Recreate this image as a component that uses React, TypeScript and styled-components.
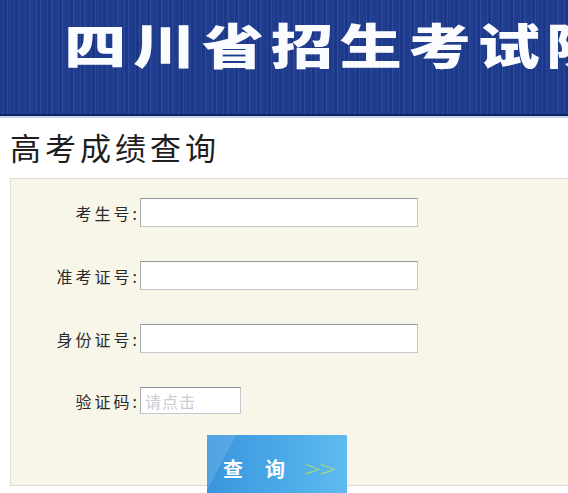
import React from "react";
import styled, { createGlobalStyle } from "styled-components";

const GlobalStyle = createGlobalStyle`
  html, body {
    margin: 0;
    padding: 0;
    background: #ffffff;
    overflow: hidden;
  }
  body {
    font-family: "Noto Sans CJK SC", "Liberation Sans", sans-serif;
  }
`;

const Page = styled.div`
  width: 568px;
  height: 493px;
  overflow: hidden;
  background: #ffffff;
`;

const Banner = styled.header`
  height: 116px;
  box-sizing: border-box;
  padding: 19px 0 0 64px;
  overflow: hidden;
  white-space: nowrap;
  background: repeating-linear-gradient(
    90deg,
    #1f3b8b 0 3px,
    #28479c 3px 4px,
    #1c3785 4px 7px,
    #2b4ba2 7px 8px,
    #203d8e 8px 11px
  );
  border-bottom: 2px solid #0e2463;
  box-shadow: 0 2px 0 #c9d6ee;
`;

const BannerTitle = styled.h1`
  display: inline-block;
  margin: 0;
  font-size: 48px;
  line-height: 48px;
  font-weight: 900;
  letter-spacing: 5px;
  color: #fbfcff;
  transform: scaleX(1.3);
  transform-origin: left center;
`;

const Heading = styled.h2`
  margin: 0;
  padding: 15px 10px 15px;
  font-size: 31px;
  line-height: 32px;
  font-weight: 400;
  letter-spacing: 4px;
  color: #1e1e1e;
`;

const FormPanel = styled.form`
  box-sizing: border-box;
  height: 308px;
  margin-left: 10px;
  padding-top: 19px;
  background: #f8f5e9;
  border-top: 1px solid #dcdcd4;
  border-left: 1px solid #e2dfd4;
  border-bottom: 1px solid #dcdad2;
`;

const FieldGrid = styled.div`
  display: grid;
  grid-template-columns: 129px auto;
  row-gap: 34px;
  align-items: center;
  justify-items: start;
`;

const Label = styled.label`
  justify-self: end;
  font-size: 16px;
  line-height: 20px;
  letter-spacing: 3px;
  color: #2a2a2a;
`;

const TextField = styled.input<{ $width: number; $height: number }>`
  box-sizing: border-box;
  width: ${(p) => p.$width}px;
  height: ${(p) => p.$height}px;
  margin: 0;
  padding: 0 4px;
  background: #ffffff;
  border: 1px solid #c4c8cc;
  border-top-color: #8f959c;
  border-left-color: #a9aeb4;
  font-family: "Noto Sans CJK SC", "Liberation Sans", sans-serif;
  font-size: 16px;
  color: #333;
  outline: none;

  &::placeholder {
    color: #c9cbcf;
    letter-spacing: 1px;
  }
`;

const SubmitButton = styled.button`
  grid-column: 2;
  margin: -13px 0 0 67px;
  width: 140px;
  height: 62px;
  box-sizing: border-box;
  padding: 23px 0 0 16px;
  display: flex;
  align-items: flex-start;
  gap: 22px;
  border: none;
  border-bottom: 1px solid #3489cf;
  background:
    linear-gradient(118deg, rgba(255, 255, 255, 0.12) 0 17%, transparent 17% 100%),
    linear-gradient(90deg, #3a95dc 0%, #48a6e6 45%, #5fbaef 100%);
  font-family: "Noto Sans CJK SC", "Liberation Sans", sans-serif;
  cursor: pointer;
`;

const ButtonChar = styled.span`
  font-size: 20px;
  line-height: 22px;
  font-weight: 700;
  color: #ffffff;
`;

const Chevrons = styled.span`
  margin-left: -4px;
  font-family: "DejaVu Sans", sans-serif;
  font-size: 22px;
  line-height: 22px;
  font-weight: 300;
  letter-spacing: -3px;
  color: #b0dc6c;
`;

export default function App() {
  return (
    <Page>
      <GlobalStyle />
      <Banner>
        <BannerTitle>四川省招生考试院</BannerTitle>
      </Banner>
      <Heading>高考成绩查询</Heading>
      <FormPanel onSubmit={(e) => e.preventDefault()}>
        <FieldGrid>
          <Label htmlFor="ksh">考生号:</Label>
          <TextField id="ksh" $width={278} $height={29} />
          <Label htmlFor="zkzh">准考证号:</Label>
          <TextField id="zkzh" $width={278} $height={29} />
          <Label htmlFor="sfzh">身份证号:</Label>
          <TextField id="sfzh" $width={278} $height={29} />
          <Label htmlFor="yzm">验证码:</Label>
          <TextField id="yzm" $width={101} $height={27} placeholder="请点击" />
          <SubmitButton type="submit">
            <ButtonChar>查</ButtonChar>
            <ButtonChar>询</ButtonChar>
            <Chevrons>&gt;&gt;</Chevrons>
          </SubmitButton>
        </FieldGrid>
      </FormPanel>
    </Page>
  );
}
